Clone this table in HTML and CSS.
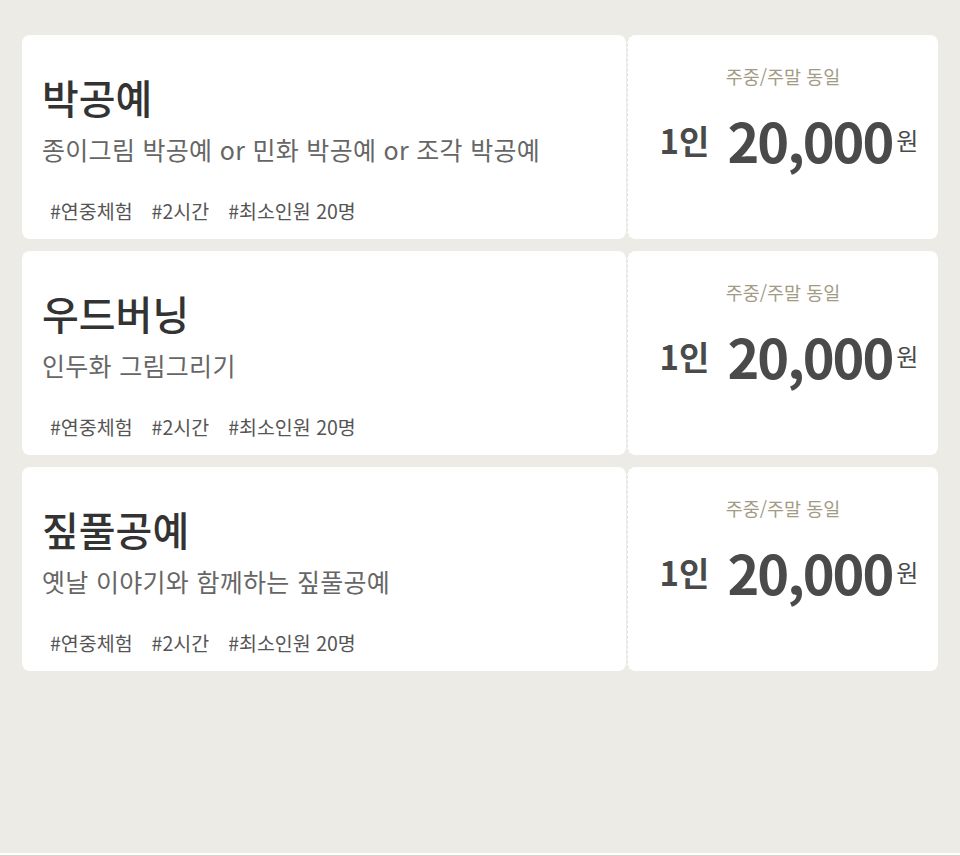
FILE: index.html
```html
<!DOCTYPE html>
<html lang="ko">
<head>
<meta charset="utf-8">
<link rel="stylesheet" href="styles.css">
</head>
<body>
<main class="list">
  <section class="ticket">
    <div class="info">
      <h2 class="title">박공예</h2>
      <p class="desc">종이그림 박공예 or 민화 박공예 or 조각 박공예</p>
      <ul class="tags"><li>#연중체험</li><li>#2시간</li><li>#최소인원 20명</li></ul>
    </div>
    <div class="price">
      <p class="label">주중/주말 동일</p>
      <p class="amount"><span class="per">1인</span><span class="num">20,000</span><span class="won">원</span></p>
    </div>
  </section>
  <section class="ticket">
    <div class="info">
      <h2 class="title">우드버닝</h2>
      <p class="desc">인두화 그림그리기</p>
      <ul class="tags"><li>#연중체험</li><li>#2시간</li><li>#최소인원 20명</li></ul>
    </div>
    <div class="price">
      <p class="label">주중/주말 동일</p>
      <p class="amount"><span class="per">1인</span><span class="num">20,000</span><span class="won">원</span></p>
    </div>
  </section>
  <section class="ticket">
    <div class="info">
      <h2 class="title">짚풀공예</h2>
      <p class="desc">옛날 이야기와 함께하는 짚풀공예</p>
      <ul class="tags"><li>#연중체험</li><li>#2시간</li><li>#최소인원 20명</li></ul>
    </div>
    <div class="price">
      <p class="label">주중/주말 동일</p>
      <p class="amount"><span class="per">1인</span><span class="num">20,000</span><span class="won">원</span></p>
    </div>
  </section>
</main>
<footer class="foot"></footer>
</body>
</html>
```

FILE: styles.css
```css
html, body {
  margin: 0;
  padding: 0;
}
body {
  background: #edebe6;
  font-family: "Noto Sans CJK KR", "Noto Sans", sans-serif;
  width: 960px;
  height: 856px;
  display: flex;
  flex-direction: column;
}
.list {
  flex: 1;
  display: flex;
  flex-direction: column;
  gap: 12px;
  padding: 35px 22px 0;
}
.ticket {
  display: flex;
  height: 204px;
}
.info {
  width: 604px;
  background: #fff;
  border-radius: 8px;
  padding: 0 20px;
  box-sizing: border-box;
}
.title {
  margin: 36px 0 0;
  font-size: 40px;
  line-height: 52px;
  font-weight: 500;
  color: #333;
}
.desc {
  margin: 8px 0 0;
  font-size: 25px;
  line-height: 36px;
  color: #666;
  letter-spacing: 0.3px;
}
.tags {
  list-style: none;
  margin: 31px 0 0;
  padding: 0 0 0 8px;
  display: flex;
  gap: 19px;
  font-size: 19.5px;
  line-height: 26px;
  color: #555;
}
.price {
  margin-left: 1px;
  width: 311px;
  background: #fff;
  border-radius: 8px;
  border-left: 1px dashed #e2e2e2;
  box-sizing: border-box;
  text-align: center;
}
.label {
  margin: 28px 0 0;
  font-size: 18.5px;
  line-height: 26px;
  color: #a39b86;
}
.amount {
  margin: 21px 0 0;
  padding-left: 12px;
  height: 60px;
  display: flex;
  justify-content: center;
  align-items: center;
  color: #4a4a4a;
  font-weight: 700;
  white-space: nowrap;
}
.amount span {
  line-height: 1;
}
.per {
  font-size: 33px;
  margin-right: 18px;
}
.num {
  font-size: 54px;
  letter-spacing: -2px;
}
.won {
  font-size: 24px;
  font-weight: 400;
  margin-left: 4px;
}
.foot {
  height: 1px;
  border-top: 2px solid #fff;
  background: #d8d6cc;
}
```
